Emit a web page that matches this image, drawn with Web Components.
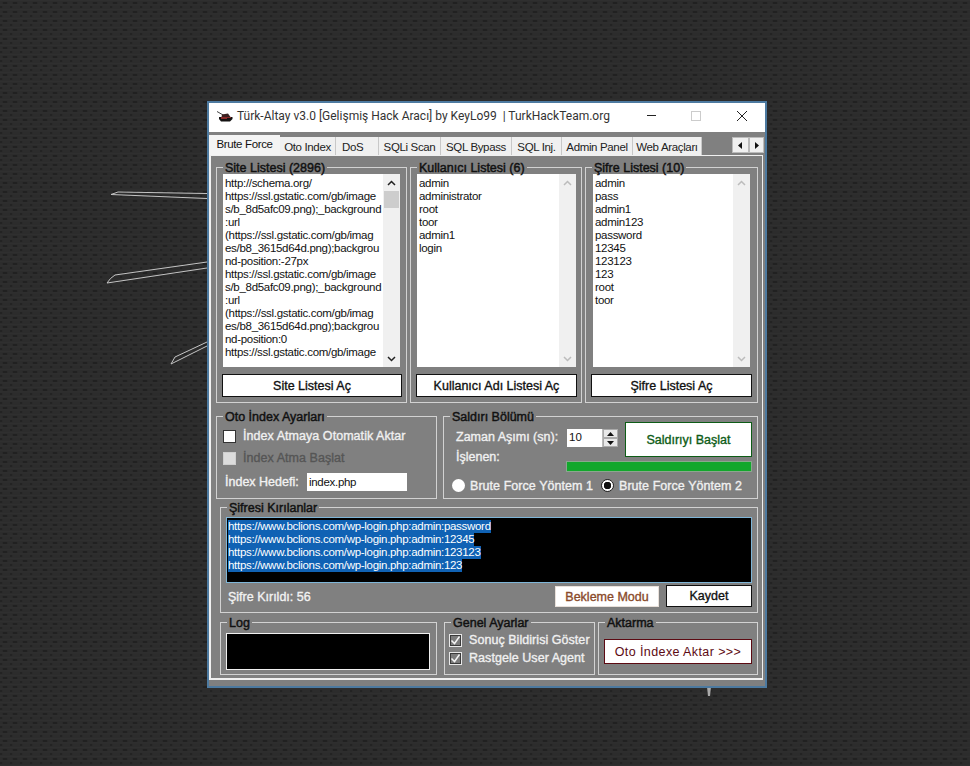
<!DOCTYPE html>
<html lang="tr">
<head>
<meta charset="utf-8">
<title>Türk-Altay v3.0</title>
<style>
html, body { margin: 0; height: 100%; }
body {
  width: 970px; height: 766px; overflow: hidden; position: relative;
  background-color: #2c2c2c;
  background-image:
    radial-gradient(ellipse 3px 1.5px at 5px 3px, #212121 60%, transparent 100%),
    radial-gradient(ellipse 3px 1.5px at 0px 7px, #232323 60%, transparent 100%),
    linear-gradient(#2f2f2f 1px, transparent 1px);
  background-size: 10px 9px, 10px 9px, 10px 4.5px;
  font: 12px "Liberation Sans", Arial, sans-serif;
}
.target-row{display:flex;align-items:center;gap:6px;margin-top:9px;margin-left:2px;font-size:12.5px}
.target-row .lbl{width:76px;letter-spacing:0}
.lbl{color:#f2f2f2;-webkit-text-stroke:.35px currentColor;white-space:nowrap}
.text-in{display:block;width:100px;height:18px;background:#fff;color:#111;font-size:11.5px;letter-spacing:-.3px;line-height:18px;padding-left:2px;box-sizing:border-box}
.result-foot{display:flex;justify-content:space-between;align-items:center;width:526px;margin-top:2px;height:22px;padding-left:2px;box-sizing:border-box;font-size:12.5px}
.result-foot .lbl{padding-top:2px}
.foot-btns{display:flex;gap:7px;align-items:flex-start}
.log-box{width:204px;height:37px;background:#000;border:1px solid #f0f0f0;box-sizing:border-box}
</style>
</head>
<body>

<bg-sketch></bg-sketch>

<app-window>
  <tab-strip slot="tabs"></tab-strip>
  <panel-row style="--top:11px">
    <group-box title="Site Listesi (2896)" w="191" h="236">
      <scroll-list w="177" h="193" active>http://schema.org/
https://ssl.gstatic.com/gb/image
s/b_8d5afc09.png);_background
:url
(https://ssl.gstatic.com/gb/imag
es/b8_3615d64d.png);backgrou
nd-position:-27px
https://ssl.gstatic.com/gb/image
s/b_8d5afc09.png);_background
:url
(https://ssl.gstatic.com/gb/imag
es/b8_3615d64d.png);backgrou
nd-position:0
https://ssl.gstatic.com/gb/image</scroll-list>
      <win-button w="180" h="23" style="margin:7px 0 0 -1px">Site Listesi Aç</win-button>
    </group-box>
    <group-box title="Kullanıcı Listesi (6)" w="172" h="236">
      <scroll-list w="159" h="193">admin
administrator
root
toor
admin1
login</scroll-list>
      <win-button w="161" h="23" style="margin:7px 0 0 -1px">Kullanıcı Adı Listesi Aç</win-button>
    </group-box>
    <group-box title="Şifre Listesi (10)" w="173" h="236" pad="6 0 0 7">
      <scroll-list w="157" h="193">admin
pass
admin1
admin123
password
12345
123123
123
root
toor</scroll-list>
      <win-button w="161" h="23" style="margin:7px 0 0 -2px">Şifre Listesi Aç</win-button>
    </group-box>
  </panel-row>

  <panel-row style="--top:13px; --gap:6px">
    <group-box title="Oto İndex Ayarları" w="221" h="83" pad="13 0 0 6">
      <check-row>İndex Atmaya Otomatik Aktar</check-row>
      <check-row disabled style="margin-top:10px">İndex Atma Başlat</check-row>
      <div class="target-row">
        <span class="lbl">İndex Hedefi:</span>
        <span class="text-in">index.php</span>
      </div>
    </group-box>
    <group-box title="Saldırı Bölümü" w="315" h="83" pad="5 0 0 0">
      <attack-panel></attack-panel>
    </group-box>
  </panel-row>

  <panel-row style="--top:8px; --left:4px">
    <group-box title="Şifresi Kırılanlar" w="538" h="106" pad="9 0 0 5">
      <result-box></result-box>
      <div class="result-foot">
        <span class="lbl">Şifre Kırıldı: 56</span>
        <span class="foot-btns">
          <win-button w="104" h="21" border="#e8e0da" color="#8a4a2a" style="margin-top:1px">Bekleme Modu</win-button>
          <win-button w="86" h="22">Kaydet</win-button>
        </span>
      </div>
    </group-box>
  </panel-row>

  <panel-row style="--top:9px; --left:4px; --gap:7px">
    <group-box title="Log" w="217" h="53" pad="10 0 0 5">
      <div class="log-box"></div>
    </group-box>
    <group-box title="Genel Ayarlar" w="151" h="53" pad="11 0 0 4" style="margin-right:-4px">
      <check-row checked>Sonuç Bildirisi Göster</check-row>
      <check-row checked style="margin-top:6px">Rastgele User Agent</check-row>
    </group-box>
    <group-box title="Aktarma" w="160" h="53" pad="16 0 0 5">
      <win-button w="148" h="25" border="#5c0a12" color="#5c0a12" plain>Oto İndexe Aktar &gt;&gt;&gt;</win-button>
    </group-box>
  </panel-row>
</app-window>

<script>
// faux bold, winforms draws these labels smeared
var FAUX = "-webkit-text-stroke:.35px currentColor;";

class BgSketch extends HTMLElement {
  constructor(){
    super();
    this.attachShadow({mode:"open"}).innerHTML = `
    <style>:host{position:absolute;left:0;top:0;width:970px;height:766px;display:block}</style>
    <svg width="970" height="766" fill="none" stroke="#c4c4c4" stroke-width="1">
      <path d="M207 193.5 L118 192 L111 194.5 L207 198.5"/>
      <path d="M207 262 L115 275 Q110 278 107 283 L207 268"/>
      <path d="M207 342 L175 357 L171 364 L207 346"/>
      <path d="M707 687 L711 687 L710 696 L708 696 Z" fill="#aaa" stroke="none"/>
    </svg>`;
  }
}
customElements.define("bg-sketch", BgSketch);

var template_window = document.createElement("template");
template_window.innerHTML = `
<style>
:host{position:absolute;left:207px;top:101px;width:556px;height:583px;display:flex;flex-direction:column;
  border:2px solid #4d7aa0;background:#808080;color:#000;font:12px "Liberation Sans",Arial,sans-serif}
.title{height:29px;background:#fff;display:flex;align-items:center;flex:none}
.tank{margin:0 4px 2px 8px;flex:none}
.name{font:12px Roboto,"Liberation Sans",sans-serif;color:#333;white-space:pre;flex:1;margin-top:-3px}
.ctl{margin:-3px 18px 0 0;flex:none}
.ctl svg{display:block}
.body{flex:1;display:flex;flex-direction:column;min-height:0}
.panel{margin:0 2px 6px 0;border:1px solid #f0f0f0;border-left-width:2px;border-bottom-width:2px;flex:1;padding:0 4px 0 5px;display:flex;flex-direction:column}
</style>
<div class="title">
  <svg class="tank" width="16" height="12" viewBox="0 0 16 12">
    <path d="M0 0.5 L7 4.5" stroke="#444" stroke-width="1"/>
    <path d="M5 3.500 L11 2.500 L13.500 6 L4.500 6 Z" fill="#3a2020"/>
    <path d="M2 6 L15.500 6 L15.500 8 L13 10.500 L4 10.500 L2 8 Z" fill="#141212"/>
    <path d="M4 6.500 L14 6.500 M4 7.500 L10 7.500" stroke="#8a2a2a"/>
  </svg>
  <span class="name">Türk-Altay v3.0 [Gelişmiş Hack Aracı] by KeyLo99  | TurkHackTeam.org</span>
  <div class="ctl">
    <svg width="100" height="14" viewBox="0 0 100 14">
      <path d="M0 6.500 H9" stroke="#222"/>
      <rect x="44.500" y="2.500" width="9" height="9" fill="none" stroke="#ccc"/>
      <path d="M90 2 L100 12 M100 2 L90 12" stroke="#222"/>
    </svg>
  </div>
</div>
<div class="body">
  <slot name="tabs"></slot>
  <div class="panel"><slot></slot></div>
</div>`;

class AppWindow extends HTMLElement {
  constructor(){
    super();
    this.attachShadow({mode:"open"}).appendChild(template_window.content.cloneNode(true));
  }
}
customElements.define("app-window", AppWindow);

var template_tabs = document.createElement("template");
template_tabs.innerHTML = `
<style>
:host{display:flex;height:23px;align-items:flex-end;flex:none}
.tab{height:18px;background:#f0f0f0;border-right:1px solid #c8c8c8;box-sizing:border-box;text-align:center;line-height:20px;font-size:11.5px;letter-spacing:-.35px;color:#222;white-space:nowrap;overflow:hidden}
.tab.on{height:20px;background:#f4f4f4;border:0;line-height:19px;color:#111}
.arrows{margin-left:auto;margin-right:1px;margin-bottom:2px;display:flex}
.arr{height:16px;box-sizing:border-box;background:#f0f0f0;border:1px solid #bbb;display:flex;align-items:center;justify-content:center}
</style>
<div class="tab on" style="width:71px">Brute Force</div>
<div class="tab" style="width:56px">Oto Index</div>
<div class="tab" style="width:43px;text-align:left;padding-left:6px">DoS</div>
<div class="tab" style="width:62px">SQLi Scan</div>
<div class="tab" style="width:71px">SQL Bypass</div>
<div class="tab" style="width:50px">SQL Inj.</div>
<div class="tab" style="width:71px">Admin Panel</div>
<div class="tab" style="width:69px">Web Araçları</div>
<div class="arrows">
  <div class="arr" style="width:17px"><svg width="5" height="7"><path d="M4 0 V7 L0 3.500 Z" fill="#111"/></svg></div>
  <div class="arr" style="width:15px"><svg width="5" height="7"><path d="M1 0 V7 L5 3.500 Z" fill="#111"/></svg></div>
</div>`;

class TabStrip extends HTMLElement {
  constructor(){
    super();
    this.attachShadow({mode:"open"}).appendChild(template_tabs.content.cloneNode(true));
  }
}
customElements.define("tab-strip", TabStrip);

class PanelRow extends HTMLElement {
  constructor(){
    super();
    this.attachShadow({mode:"open"}).innerHTML = `
    <style>:host{display:flex;gap:var(--gap,3px);margin-top:var(--top,0);margin-left:var(--left,0);flex:none}</style>
    <slot></slot>`;
  }
}
customElements.define("panel-row", PanelRow);

class GroupBox extends HTMLElement {
  connectedCallback(){
    var w = this.getAttribute("w"), h = this.getAttribute("h");
    var pad = (this.getAttribute("pad") || "6 0 0 6").split(" ").map(function(n){return n + "px"}).join(" ");
    var root = this.shadowRoot || this.attachShadow({mode:"open"});
    root.innerHTML = `
    <style>
    :host{display:block;box-sizing:border-box;width:${w}px;height:${h}px;border:1px solid #d2d2d2;position:relative;padding:${pad};color:#f2f2f2;flex:none}
    .legend{position:absolute;left:6px;top:-7px;height:12px;background:#808080;padding:0 2px;line-height:14px;color:#111;font-size:12.5px;white-space:nowrap;-webkit-text-stroke:.45px currentColor}
    </style>
    <span class="legend"></span><slot></slot>`;
    root.querySelector(".legend").textContent = this.getAttribute("title");
    this.removeAttribute("title");
  }
}
customElements.define("group-box", GroupBox);

class ScrollList extends HTMLElement {
  connectedCallback(){
    var w = this.getAttribute("w"), h = this.getAttribute("h");
    var on = this.hasAttribute("active");
    var arrow = on ? "#222" : "#bcbcbc";
    var root = this.shadowRoot || this.attachShadow({mode:"open"});
    root.innerHTML = `
    <style>
    :host{display:flex;width:${w}px;height:${h}px;background:#fff;color:#111;overflow:hidden;font-size:11.5px;line-height:13px}
    .txt{flex:1;padding:3px 0 0 2px;white-space:pre;overflow:hidden;letter-spacing:-.3px}
    .bar{width:17px;background:#f0f0f0;display:flex;flex-direction:column;align-items:center;flex:none}
    .arrow{height:17px;display:flex;align-items:center;justify-content:center;flex:none}
    .thumb{width:15px;height:17px;background:#cdcdcd;flex:none}
    .sp{flex:1}
    </style>
    <div class="txt"><slot></slot></div>
    <div class="bar">
      <div class="arrow"><svg width="9" height="6"><path d="M1 5 L4.500 1.500 L8 5" fill="none" stroke="${arrow}" stroke-width="1.500"/></svg></div>
      ${on ? '<div class="thumb"></div>' : ''}
      <div class="sp"></div>
      <div class="arrow"><svg width="9" height="6"><path d="M1 1 L4.500 4.500 L8 1" fill="none" stroke="${arrow}" stroke-width="1.500"/></svg></div>
    </div>`;
  }
}
customElements.define("scroll-list", ScrollList);

class WinButton extends HTMLElement {
  connectedCallback(){
    var w = this.getAttribute("w"), h = this.getAttribute("h");
    var b = this.getAttribute("border") || "#111";
    var c = this.getAttribute("color") || "#111";
    var plain = this.hasAttribute("plain");
    var root = this.shadowRoot || this.attachShadow({mode:"open"});
    root.innerHTML = `
    <style>
    :host{display:flex;box-sizing:border-box;width:${w}px;height:${h}px;background:#fff;border:1px solid ${b};color:${c};
      align-items:center;justify-content:center;font-size:12.5px;white-space:nowrap;${plain ? "letter-spacing:.4px;" : FAUX}}
    </style><slot></slot>`;
  }
}
customElements.define("win-button", WinButton);

class CheckRow extends HTMLElement {
  connectedCallback(){
    var on = this.hasAttribute("checked"), off = this.hasAttribute("disabled");
    var root = this.shadowRoot || this.attachShadow({mode:"open"});
    var box = on
      ? `<span class="box ck"><svg width="11" height="11"><path d="M1.500 5.500 L4.500 8.500 L9.500 1.500" fill="none" stroke="#f4f4f4" stroke-width="1.500"/></svg></span>`
      : `<span class="box"></span>`;
    root.innerHTML = `
    <style>
    :host{display:flex;align-items:center;gap:7px;height:12px;color:${off ? "#555" : "#f0f0f0"};font-size:12.5px;white-space:nowrap;${FAUX}letter-spacing:.05px}
    .box{width:13px;height:13px;box-sizing:border-box;background:${off ? "#dcdcdc" : "#fff"};border:1px solid ${off ? "#cfcfcf" : "#333"};flex:none;-webkit-text-stroke:0}
    .ck{background:#7c7c7c;border:1px solid #e8e8e8;box-shadow:inset 0 0 0 1px #3a3a3a;display:flex;align-items:center;justify-content:center}
    </style>${box}<span><slot></slot></span>`;
  }
}
customElements.define("check-row", CheckRow);

var template_attack = document.createElement("template");
template_attack.innerHTML = `
<style>
:host{display:grid;grid-template-columns:122px 59px 127px;grid-template-rows:35px 4px 11px 23px;color:#f0f0f0;font-size:12.5px}
.z{grid-column:1;grid-row:1;padding:8px 0 0 12px;white-space:nowrap;${FAUX}}
.i{grid-column:1;grid-row:1 / span 3;padding:28px 0 0 12px;${FAUX}}
.spin{grid-column:2;grid-row:1;width:51px;height:18px;margin:7px 0 0 1px;background:#fff;color:#111;display:flex;font-size:11.5px;line-height:17px;padding-left:2px;box-sizing:border-box;justify-content:space-between}
.btns{width:15px;display:flex;flex-direction:column;background:#e8e8e8;border-left:1px solid #bbb}
.btns span{flex:1;display:flex;align-items:center;justify-content:center;border:1px solid #aaa}
.start{grid-column:3;grid-row:1;width:127px;height:35px;box-sizing:border-box;border:1px solid #0d5c16;background:#fff;color:#0d5c16;display:flex;align-items:center;justify-content:center;${FAUX}}
.bar{grid-column:2 / span 2;grid-row:3;width:186px;height:11px;background:#12a72c;border:1px solid #8aa88e;box-sizing:border-box}
.radios{grid-column:1 / span 3;grid-row:4;display:flex;align-items:center;padding:4px 0 0 8px;white-space:nowrap;letter-spacing:.05px}
.r{display:flex;align-items:center;gap:5px;width:149px;flex:none;${FAUX}}
.dot{width:13px;height:13px;border-radius:50%;background:#fff;box-sizing:border-box;flex:none;-webkit-text-stroke:0}
.dot.on{border:1px solid #222;background:radial-gradient(circle,#111 0 3.500px,#fff 4px)}
</style>
<div class="z">Zaman Aşımı (sn):</div>
<div class="i">İşlenen:</div>
<div class="spin"><span>10</span><span class="btns">
  <span><svg width="7" height="4"><path d="M0 4 H7 L3.500 0 Z" fill="#111"/></svg></span>
  <span><svg width="7" height="4"><path d="M0 0 H7 L3.500 4 Z" fill="#111"/></svg></span>
</span></div>
<div class="start">Saldırıyı Başlat</div>
<div class="bar"></div>
<div class="radios">
  <div class="r"><span class="dot"></span>Brute Force Yöntem 1</div>
  <div class="r"><span class="dot on"></span>Brute Force Yöntem 2</div>
</div>`;

class AttackPanel extends HTMLElement {
  constructor(){
    super();
    this.attachShadow({mode:"open"}).appendChild(template_attack.content.cloneNode(true));
  }
}
customElements.define("attack-panel", AttackPanel);

var template_result = document.createElement("template");
template_result.innerHTML = `
<style>
:host{display:block;box-sizing:border-box;width:526px;height:66px;background:#000;border:1px solid #7fb6d8;padding:2px 0 0 1px;font-size:11.5px;line-height:13px}
.l{display:table;background:#1062b4;color:#fff;letter-spacing:-.3px}
</style>
<span class="l">https://www.bclions.com/wp-login.php:admin:password</span>
<span class="l">https://www.bclions.com/wp-login.php:admin:12345</span>
<span class="l">https://www.bclions.com/wp-login.php:admin:123123</span>
<span class="l">https://www.bclions.com/wp-login.php:admin:123</span>`;

class ResultBox extends HTMLElement {
  constructor(){
    super();
    this.attachShadow({mode:"open"}).appendChild(template_result.content.cloneNode(true));
  }
}
customElements.define("result-box", ResultBox);
</script>
</body>
</html>
